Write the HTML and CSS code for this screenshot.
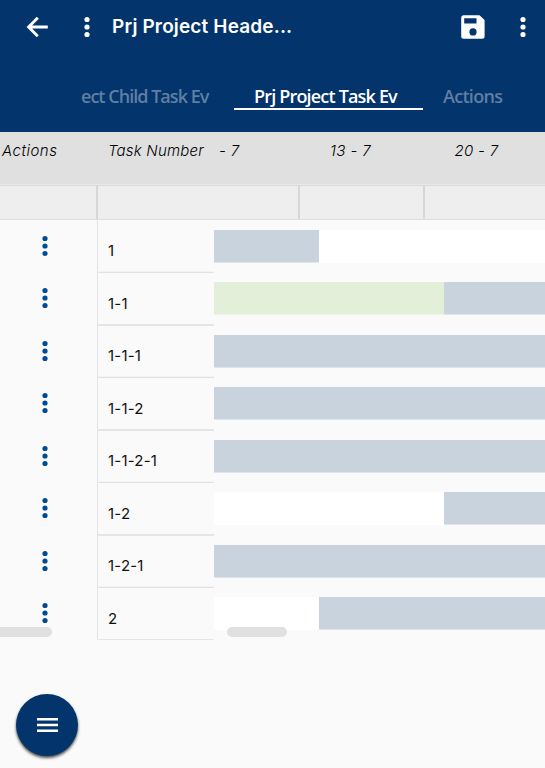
FILE: index.html
```html
<!DOCTYPE html>
<html lang="en">
<head>
<meta charset="utf-8">
<title>Prj Project Header</title>
<link rel="stylesheet" href="styles.css">
</head>
<body>
<svg class="defs" width="0" height="0" aria-hidden="true">
  <symbol id="more" viewBox="0 0 30 30"><circle cx="15" cy="7.5" r="2.6"/><circle cx="15" cy="15" r="2.6"/><circle cx="15" cy="22.5" r="2.6"/></symbol>
</svg>
<header class="header">
  <div class="toolbar">
    <svg class="back" viewBox="0 0 30 30"><path d="M25.8 15H6.8M15.8 5.8L6.6 15l9.2 9.2" fill="none" stroke="#fff" stroke-width="2.9"/></svg>
    <svg class="icon title-more"><use href="#more"/></svg>
    <h1 class="title">Prj Project Heade...</h1>
    <svg class="save" viewBox="0 0 24 24"><path fill-rule="evenodd" d="M2.7 0.2H18.5L23.6 5V21.3a2.5 2.5 0 0 1-2.5 2.5H2.7A2.5 2.5 0 0 1 .2 21.3V2.7A2.5 2.5 0 0 1 2.7.2zM3.2 3.3V8.4H15.5V3.3zM12 13.3a3.6 3.6 0 1 0 0 7.2 3.6 3.6 0 0 0 0-7.2z"/></svg>
    <svg class="icon"><use href="#more"/></svg>
  </div>
  <nav class="tabs">
    <div class="tab tab-cut"><span>ect Child Task Ev</span></div>
    <div class="tab tab-active"><span>Prj Project Task Ev</span></div>
    <div class="tab tab-last"><span>Actions</span></div>
  </nav>
</header>
<main class="sheet">
  <div class="head">
    <div class="head-actions"><span>Actions</span></div>
    <div class="head-task"><span>Task Number</span></div>
    <div class="week week-first"><span>- 7</span></div>
    <div class="week"><span>13 - 7</span></div>
    <div class="week"><span>20 - 7</span></div>
  </div>
  <div class="sub"><i></i><i></i><i></i><i></i></div>
  <div class="rows">
    <div class="row"><svg class="icon"><use href="#more"/></svg><div class="task"><span>1</span></div><div class="bar"><i class="blue short"></i><i class="white"></i></div></div>
    <div class="row"><svg class="icon"><use href="#more"/></svg><div class="task"><span>1-1</span></div><div class="bar"><i class="green long"></i><i class="blue"></i></div></div>
    <div class="row"><svg class="icon"><use href="#more"/></svg><div class="task"><span>1-1-1</span></div><div class="bar"><i class="blue"></i></div></div>
    <div class="row"><svg class="icon"><use href="#more"/></svg><div class="task"><span>1-1-2</span></div><div class="bar"><i class="blue"></i></div></div>
    <div class="row"><svg class="icon"><use href="#more"/></svg><div class="task"><span>1-1-2-1</span></div><div class="bar"><i class="blue"></i></div></div>
    <div class="row"><svg class="icon"><use href="#more"/></svg><div class="task"><span>1-2</span></div><div class="bar"><i class="white long"></i><i class="blue"></i></div></div>
    <div class="row"><svg class="icon"><use href="#more"/></svg><div class="task"><span>1-2-1</span></div><div class="bar"><i class="blue"></i></div></div>
    <div class="row"><svg class="icon"><use href="#more"/></svg><div class="task"><span>2</span></div><div class="bar"><i class="white short"></i><i class="blue"></i></div></div>
  </div>
  <div class="thumb thumb-left"></div>
  <div class="thumb thumb-right"></div>
</main>
<button class="fab" aria-label="Menu"><svg viewBox="0 0 21 15"><path d="M0 0h21v2.5H0zM0 5.7h21v2.5H0zM0 11.4h21v2.5H0z"/></svg></button>
</body>
</html>
```
FILE: styles.css
```css
* { box-sizing: border-box; }
body { margin: 0; width: 545px; height: 768px; overflow: hidden; background: #fafafa; color: #111; font-family: Inter, sans-serif; position: relative; }
.defs { position: absolute; }
svg { display: block; flex: none; }
.icon { width: 30px; height: 30px; }
span { white-space: nowrap; }

.header { height: 132px; background: #03346b; color: #fff; fill: #fff; }
.toolbar { height: 54px; display: flex; align-items: center; padding: 0 7px 0 22px; }
.back { width: 30px; height: 30px; }
.title-more { margin-left: 20px; }
.title { margin: 0 auto 0 10px; font-size: 19px; line-height: 24px; font-weight: 600; letter-spacing: 0.15px; white-space: nowrap; }
.save { width: 24px; height: 24px; margin-right: 23px; }

.tabs { display: flex; margin-top: 30px; font: 600 18px/24px "Open Sans", sans-serif; letter-spacing: -0.82px; }
.tab { height: 26px; color: #5f7fa3; }
.tab-cut { margin-left: 81px; width: 153px; letter-spacing: -0.97px; }
.tab-active { width: 189px; padding-left: 20px; color: #fff; border-bottom: 2px solid #fff; }
.tab-last { margin-left: 20px; letter-spacing: -0.7px; }

.sheet { position: relative; }
.head { display: flex; height: 52px; padding-top: 8px; background: #e0e0e0; color: #000; font-size: 15px; line-height: 22px; font-style: italic; font-weight: 300; letter-spacing: 0.35px; }
.head-actions { width: 97px; padding-left: 2px; letter-spacing: 0.5px; }
.head-task { width: 117px; padding-left: 11px; letter-spacing: 0.2px; }
.week { width: 125px; text-align: center; }
.week-first { width: 74px; padding-left: 5px; text-align: left; }
.week:last-child { margin-left: 1px; }
.sub { display: flex; height: 36px; background: #eee; border-top: 1px solid #e8e8e8; border-bottom: 1px solid #dedede; box-shadow: inset 0 1px #dadada; }
.sub i { border-right: 2px solid #d7d7d7; }
.sub i:nth-child(1) { width: 98px; }
.sub i:nth-child(2) { width: 202px; }
.sub i:nth-child(3) { width: 125px; }
.sub i:nth-child(4) { border: 0; }

.row { display: flex; height: 52.5px; }
.row .icon { margin: 10.9px 37.3px 0 29.7px; fill: #004b93; }
.task { width: 117px; padding: 19px 0 0 10px; border-left: 1px solid #e3e3e3; border-bottom: 1px solid #e2e2e2; box-shadow: inset 0 -1px #f3f3f3; font-size: 15px; line-height: 24px; letter-spacing: 0.2px; }
.row:nth-child(even) .task { border-bottom-color: #e5e5e5; box-shadow: 0 1px #e5e5e5; }
.row:last-child .task { box-shadow: none; }
.bar { display: flex; flex: 1; height: 33px; margin-top: 9.9px; }
.bar i { flex: 1; }
.bar .short { flex: none; width: 105px; }
.bar .long { flex: none; width: 230px; }
.blue { background: #c9d3dd; box-shadow: inset 0 -1px #dfe5ec; }
.green { background: #e3efd8; box-shadow: inset 0 -1px #edf3e8; }
.white { background: #fff; }

.thumb { position: absolute; top: 495px; height: 10px; background: #e0e0e0; border-radius: 5px; }
.thumb-left { left: -10px; width: 62px; }
.thumb-right { left: 227px; width: 60px; }
.fab { position: absolute; left: 16px; top: 694px; width: 62px; height: 62px; padding: 0; border: 0; border-radius: 50%; background: #03346b; box-shadow: 0 2px 3px rgba(0,0,0,.7); display: flex; align-items: center; justify-content: center; }
.fab svg { width: 21px; height: 15px; fill: #fff; }
```
